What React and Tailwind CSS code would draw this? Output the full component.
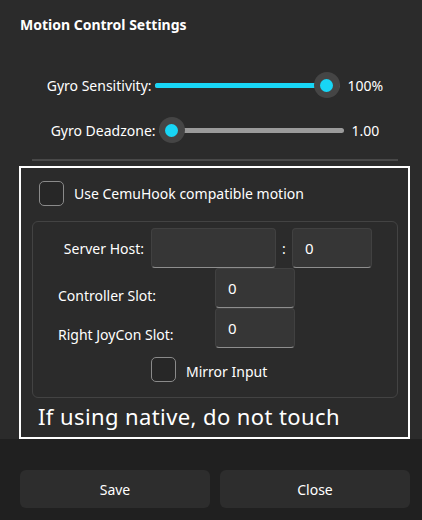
import React from 'react';

const font = { fontFamily: '"Noto Sans", "Open Sans", sans-serif' };

function Slider({ value }) {
    // value 0..1, thumb travels inside the track width minus its own size
    return (
        <div className="relative w-[185px] h-[26px] flex items-center">
            <div className="absolute left-0 right-0 h-[5px] rounded-full bg-[#9b9b9b]"></div>
            <div
                className="absolute left-0 h-[5px] rounded-full bg-[#18d6f6]"
                style={{ width: `calc((100% - 26px) * ${value} + 13px)` }}
            ></div>
            <div
                className="absolute w-[26px] h-[26px] rounded-full bg-[#454545] flex items-center justify-center"
                style={{ left: `calc((100% - 26px) * ${value})` }}
            >
                <div className="w-[13px] h-[13px] rounded-full bg-[#18d6f6]"></div>
            </div>
        </div>
    );
}

function Checkbox({ label, drop = '' }) {
    return (
        <div className="flex items-center gap-[10px]">
            <div className="w-[25px] h-[25px] rounded-[5px] border border-[#8a8a8a] bg-[#272727]"></div>
            <span className={`text-[14px] text-white ${drop}`}>{label}</span>
        </div>
    );
}

function Field({ width, value }) {
    return (
        <div
            className={`${width} h-[40px] rounded-[4px] bg-[#363636] border border-[#414141] border-b-[#8e8e8e] flex items-center pl-[12px] text-[15px] text-white`}
        >
            {value}
        </div>
    );
}

export default function App() {
    return (
        <div className="w-[422px] h-[520px] bg-[#2b2b2b] flex flex-col text-white" style={font}>
            <div className="flex-1 pl-5 pr-3 pt-[15px] flex flex-col">
                <h1 className="text-[14px] leading-[20px] font-bold">Motion Control Settings</h1>

                <div className="mt-[37px] flex items-center justify-center gap-[3px] text-[14px]">
                    <span>Gyro Sensitivity:</span>
                    <Slider value={1} />
                    <span className="ml-[5px]">100%</span>
                </div>
                <div className="mt-[19px] flex items-center justify-center gap-[3px] text-[14px]">
                    <span>Gyro Deadzone:</span>
                    <Slider value={0} />
                    <span className="ml-[5px]">1.00</span>
                </div>

                <div className="mt-[16px] mx-3 h-[2px] bg-[#484848]"></div>

                <div className="mt-[5px] -ml-px flex-1 border-2 border-white flex flex-col">
                    <div className="pl-[18px] pt-[13px]">
                        <Checkbox label="Use CemuHook compatible motion" />
                    </div>

                    <div className="mt-[15px] ml-[11px] mr-[10px] rounded-[6px] border border-[#434343] pt-[6px] pb-[15px] flex flex-col text-[14px]">
                        <div className="flex items-center">
                            <span className="w-[111px] text-right">Server Host:</span>
                            <div className="ml-[7px]">
                                <Field width="w-[125px]" value="" />
                            </div>
                            <span className="w-[16px] text-center">:</span>
                            <Field width="w-[80px]" value="0" />
                        </div>
                        <div className="flex items-center">
                            <span className="ml-[25px] w-[157px] pt-[14px]">Controller Slot:</span>
                            <Field width="w-[80px]" value="0" />
                        </div>
                        <div className="flex items-center">
                            <span className="ml-[25px] w-[157px] pt-[12px]">Right JoyCon Slot:</span>
                            <Field width="w-[80px]" value="0" />
                        </div>
                        <div className="mt-[8px] pl-[118px]">
                            <Checkbox label="Mirror Input" drop="pt-[5px]" />
                        </div>
                    </div>

                    <div className="pl-[17px] pt-[4px] text-[22px] leading-[28px] tracking-[0.4px]">If using native, do not touch</div>
                </div>
            </div>

            <div className="h-[81px] bg-[#202020] pl-5 pr-3 pt-[31px] flex gap-[10px]">
                <button className="flex-1 h-[38px] rounded-[6px] bg-[#2d2d2d] text-[14px] text-white">Save</button>
                <button className="flex-1 h-[38px] rounded-[6px] bg-[#2d2d2d] text-[14px] text-white">Close</button>
            </div>
        </div>
    );
}
